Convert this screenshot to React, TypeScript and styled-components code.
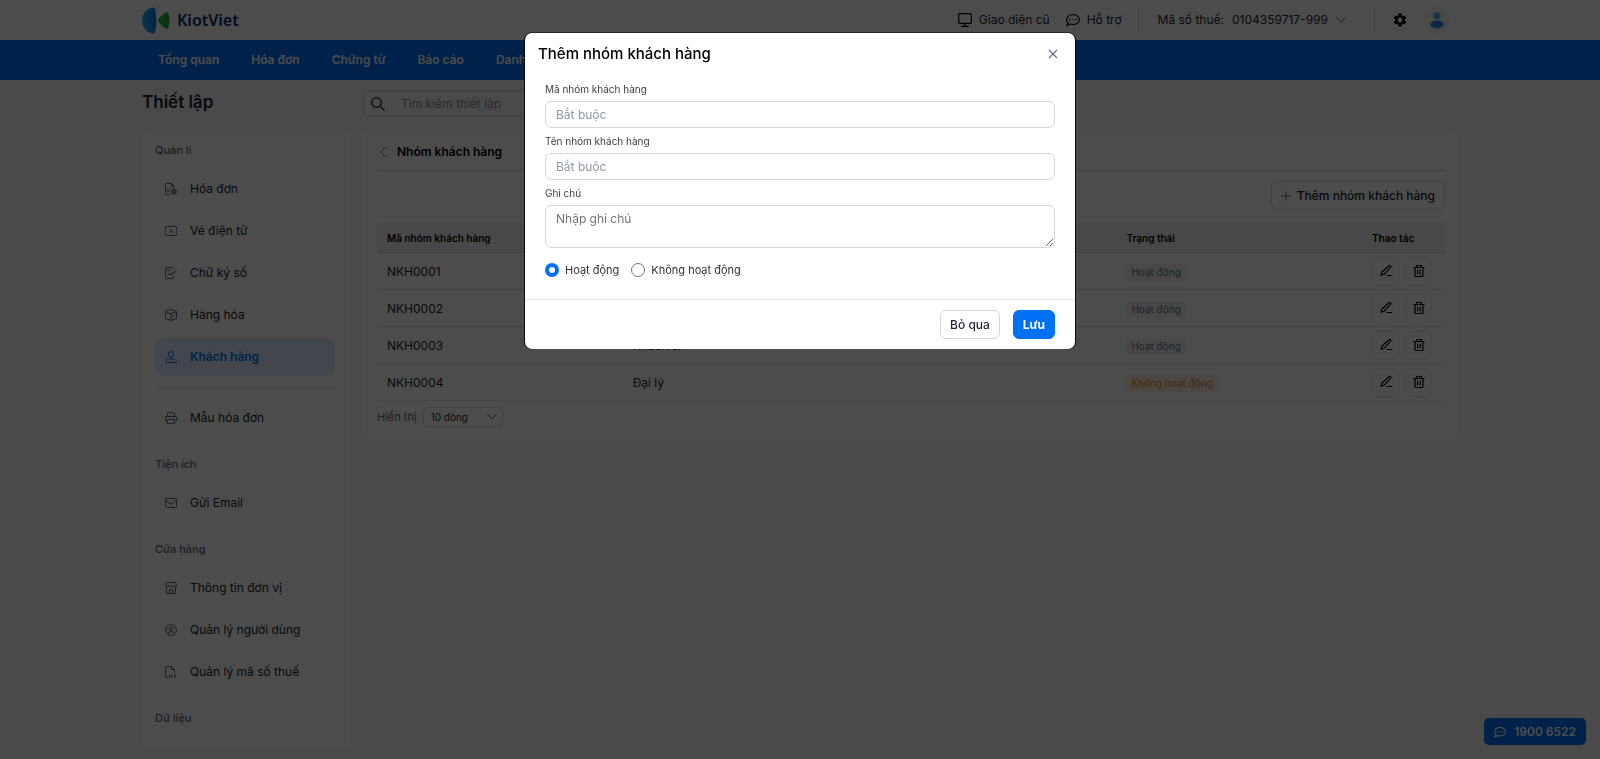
import React, { useState } from "react";
import styled, { createGlobalStyle, css } from "styled-components";
import { FaRegCommentDots } from "react-icons/fa";
import { MdSettings } from "react-icons/md";

const font = `Inter, "Noto Sans", "Liberation Sans", sans-serif`;

const GlobalStyle = createGlobalStyle`
  *, *::before, *::after { box-sizing: border-box; }
  body { margin: 0; background: #f7f7f8; color: #1b2430; font: 400 12px/20px ${font}; }
  button, input, select, textarea { font: inherit; color: inherit; margin: 0; }
  button { cursor: pointer; }
  a { color: inherit; text-decoration: none; }
`;

const Container = styled.div`
  display: flex;
  width: 100%;
  max-width: 1340px;
  margin: 0 auto;
  padding: 0 12px;
`;

const TopBar = styled.header`
  background: #fff;
`;

const TopInner = styled(Container)`
  height: 40px;
  align-items: center;
  justify-content: space-between;
`;

const Brand = styled.a`
  display: flex;
  align-items: center;
  gap: 7px;
  color: #0b2a66;
  font: 600 16px/24px "Noto Sans", sans-serif;
`;

const TopTools = styled.div`
  display: flex;
  align-items: center;
  gap: 16px;
  padding-right: 8px;
`;

const ToolLink = styled.a`
  display: flex;
  align-items: center;
  gap: 7px;
`;

const Divider = styled.span`
  width: 1px;
  height: 26px;
  background: #e3e6ea;
`;

const TaxPicker = styled.button`
  display: flex;
  align-items: center;
  gap: 8px;
  margin: 0 12px 0 3px;
  padding: 0;
  border: 0;
  background: none;
`;

const PlainButton = styled.button`
  display: flex;
  padding: 0;
  border: 0;
  background: none;
  color: #000;
`;

const GearButton = styled(PlainButton)`
  margin-left: 1px;
`;

const AvatarButton = styled(PlainButton)`
  width: 26px;
  height: 26px;
  border-radius: 50%;
  background: #f1f3f6;
  align-items: center;
  justify-content: center;
`;

const NavBar = styled.nav`
  background: #0070f4;
`;

const NavLink = styled.a`
  padding: 0 16px;
  color: #fff;
  font-size: 12px;
  font-weight: 600;
  line-height: 40px;
`;

const PageHead = styled(Container)`
  height: 50px;
  padding-top: 10px;
  gap: 13px;
`;

const PageTitle = styled.h1`
  width: 208px;
  margin: 0;
  font-size: 17px;
  font-weight: 600;
  line-height: 24px;
`;

const SearchBox = styled.label`
  display: flex;
  align-items: center;
  gap: 16px;
  width: 400px;
  height: 27px;
  padding: 0 7px;
  border: 1px solid #d3d7dd;
  border-radius: 6px;
`;

const SearchInput = styled.input`
  flex: 1;
  min-width: 0;
  padding: 0;
  border: 0;
  background: none;
  outline: none;
  &::placeholder { color: #8b939e; opacity: 1; }
`;

const Body = styled(Container)`
  align-items: flex-start;
  gap: 13px;
  padding-bottom: 10px;
`;

const panel = css`
  background: #fff;
  border-radius: 8px;
`;

const Sidebar = styled.aside`
  ${panel}
  flex: none;
  width: 208px;
  padding: 10px 15px 21px 13px;
`;

const GroupLabel = styled.h2`
  margin: 0 0 10px;
  color: #5c6673;
  font-size: 11px;
  font-weight: 500;
  line-height: 20px;
`;

const Menu = styled.ul`
  display: flex;
  flex-direction: column;
  gap: 4px;
  margin: 0 0 17px;
  padding: 0;
  list-style: none;
`;

const MenuLink = styled.a<{ $active?: boolean }>`
  display: flex;
  align-items: center;
  gap: 13px;
  height: 38px;
  padding: 0 10px;
  border-radius: 8px;
  background: ${(p) => (p.$active ? "#dfecfe" : "transparent")};
  color: ${(p) => (p.$active ? "#0070f4" : "#1b2430")};
  font-weight: ${(p) => (p.$active ? 600 : 400)};
  svg { color: ${(p) => (p.$active ? "#0070f4" : "#5c6673")}; }
`;

const MenuRule = styled.li`
  height: 1px;
  margin: 7px 0;
  background: #e6e9ed;
`;

const Panel = styled.main`
  ${panel}
  flex: 1;
  min-width: 0;
  padding: 0 13px 14px 14px;
`;

const PanelHead = styled.div`
  display: flex;
  align-items: center;
  gap: 9px;
  height: 41px;
  padding: 3px 0 0 1px;
  border-bottom: 1px solid #d8dce1;
`;

const PanelTitle = styled.h2`
  margin: 0;
  color: #000;
  font-size: 12px;
  font-weight: 600;
`;

const Toolbar = styled.div`
  display: flex;
  justify-content: flex-end;
  padding: 10px 0 13px;
`;

const OutlineButton = styled.button`
  display: flex;
  align-items: center;
  gap: 6px;
  height: 29px;
  padding: 0 9px;
  border: 1px solid #d3d7dd;
  border-radius: 6px;
  background: #fff;
  color: #1b2430;
  font-weight: 500;
`;

const DataTable = styled.table`
  width: 100%;
  table-layout: fixed;
  border-collapse: separate;
  border-spacing: 0;
`;

const HeadCell = styled.th<{ $width?: string }>`
  width: ${(p) => p.$width ?? "auto"};
  height: 30px;
  padding: 0 10px;
  border-bottom: 1px solid #cdd2d8;
  background: #f0f1f3;
  color: #000;
  font-size: 10px;
  font-weight: 600;
  text-align: left;
`;

const Cell = styled.td`
  height: 37px;
  padding: 2px 10px 0;
  border-bottom: 1px solid #e3e6ea;
`;

const ActionCell = styled(Cell)`
  padding: 0 10px;
`;

const Tag = styled.span<{ $off?: boolean }>`
  display: inline-block;
  padding: 0 5px;
  border-radius: 3px;
  background: ${(p) => (p.$off ? "#fdeee2" : "#f0f1f3")};
  color: ${(p) => (p.$off ? "#f58220" : "#69727f")};
  font-size: 10px;
  line-height: 17px;
`;

const Actions = styled.div`
  display: flex;
  gap: 6px;
`;

const ActionButton = styled.button`
  display: flex;
  align-items: center;
  justify-content: center;
  width: 27px;
  height: 29px;
  padding: 0;
  border: 1px solid #eceef1;
  border-radius: 6px;
  background: #fff;
  color: #000;
`;

const Pager = styled.label`
  display: flex;
  align-items: center;
  gap: 6px;
  padding-top: 6px;
  color: #5c6673;
  font-size: 11px;
`;

const SelectWrap = styled.span`
  display: grid;
  grid-template-columns: 1fr 16px;
  align-items: center;
  width: 80px;
  svg { grid-area: 1 / 2; pointer-events: none; }
`;

const PageSize = styled.select`
  grid-area: 1 / 1 / 2 / 3;
  width: 100%;
  height: 20px;
  padding: 0 7px;
  border: 1px solid #d3d7dd;
  border-radius: 5px;
  background: none;
  color: #1b2430;
  font-size: 10px;
  line-height: 18px;
  appearance: none;
`;

const Hotline = styled.a`
  position: fixed;
  right: 14px;
  bottom: 14px;
  display: flex;
  align-items: center;
  gap: 8px;
  height: 27px;
  padding: 0 10px;
  border-radius: 5px;
  background: #0070f4;
  color: #fff;
  font-size: 12px;
  font-weight: 600;
`;

const Overlay = styled.div`
  position: fixed;
  inset: 0;
  display: flex;
  align-items: flex-start;
  justify-content: center;
  padding: 33px 16px;
  background: rgba(0, 0, 0, 0.7);
`;

const Dialog = styled.form`
  width: 100%;
  max-width: 550px;
  border-radius: 7px;
  background: #fff;
  box-shadow: -1px 0 0 #0a0a0a, 1px 0 0 #0a0a0a, 0 -1px 0 rgba(0, 0, 0, 0.45);
`;

const DialogHead = styled.div`
  display: flex;
  align-items: center;
  justify-content: space-between;
  height: 40px;
  padding: 1px 17px 0 13px;
`;

const DialogTitle = styled.h2`
  margin: 0;
  color: #000;
  font-size: 15px;
  font-weight: 500;
  line-height: 24px;
`;

const CloseButton = styled(PlainButton)`
  color: #64748b;
`;

const Fields = styled.div`
  padding: 7px 20px 19px;
`;

const Field = styled.label`
  display: block;
  color: #3d3d3d;
  font-size: 10px;
  line-height: 18px;
`;

const fieldBox = css`
  display: block;
  width: 100%;
  margin: 3px 0 4px;
  padding: 0 10px;
  border: 1px solid #d3d6db;
  border-radius: 6px;
  background: #fff;
  color: #1b2430;
  font-size: 12px;
  outline: none;
`;

const TextInput = styled.input`
  ${fieldBox}
  height: 27px;
  &::placeholder { color: #8e98a8; opacity: 1; }
`;

const NoteArea = styled.textarea`
  ${fieldBox}
  height: 43px;
  padding: 4px 10px;
  line-height: 18px;
  &::placeholder { color: #757575; opacity: 1; }
`;

const Choices = styled.div`
  display: flex;
  gap: 12px;
  padding-top: 8px;
`;

const Choice = styled.label`
  display: flex;
  align-items: center;
  gap: 6px;
  color: #333;
  font-size: 11px;
  line-height: 20px;
`;

const Radio = styled.input`
  width: 14px;
  height: 14px;
  border: 1px solid #6b7280;
  border-radius: 50%;
  background: #fff;
  appearance: none;
  &:checked { border: 4px solid #0070f4; }
`;

const DialogFoot = styled.div`
  display: flex;
  justify-content: flex-end;
  gap: 13px;
  padding: 10px 20px;
  border-top: 1px solid #e3e6ea;
`;

const FootButton = styled(OutlineButton)<{ $primary?: boolean }>`
  font-weight: ${(p) => (p.$primary ? 700 : 500)};
  ${(p) =>
    p.$primary &&
    css`
      border-color: #0070f4;
      background: #0070f4;
      color: #fff;
    `}
`;

const Line = ({ size = 12, children }: { size?: number; children: React.ReactNode }) => (
  <svg width={size} height={size} viewBox="0 0 12 12" fill="none" stroke="currentColor" strokeWidth="1" strokeLinecap="round" strokeLinejoin="round" aria-hidden="true">
    {children}
  </svg>
);

const InvoiceIcon = () => (
  <Line>
    <path d="M4.5 11.5h-3a1 1 0 0 1-1-1v-9a1 1 0 0 1 1-1h5l2.5 2.5v2M6.3.7v2.5H9M2.5 6h2.5M2.5 8.5h1.500" />
    <circle cx="8.700" cy="8.700" r="2.600" fill="currentColor" fillOpacity="0.5" />
    <path d="M8.700 7.500v2.400" />
  </Line>
);
const TicketIcon = () => (
  <Line>
    <path d="M.5 2.500a1 1 0 0 1 1-1h9a1 1 0 0 1 1 1v1.500M.5 4V2.500M.5 8v1.500a1 1 0 0 0 1 1h9a1 1 0 0 0 1-1V8" />
    <path d="M.5 4v4M11.500 4v4" strokeDasharray="1 1" strokeLinecap="butt" />
    <path d="M7 4.800H5.800a.6.600 0 0 0 0 1.200h.5a.6.600 0 0 1 0 1.200H5M6 4v4" strokeWidth=".8" strokeLinecap="butt" />
  </Line>
);
const SignIcon = () => (
  <Line>
    <path d="M8.500 1.500a1 1 0 0 0-1-1h-5.500a1.500 1.500 0 0 0-1.500 1.500v8a1.500 1.500 0 0 0 1.500 1.500h5.500a1 1 0 0 0 1-1v-1.500M2.500 3h3M3 7.500c.8-1.200 1.400.7 2.200.2" />
    <path d="M11.500 3 7.500 7.200l-1.800.6.500-1.700" />
  </Line>
);
const BoxIcon = () => (
  <Line>
    <path d="M6 .5 11.500 2.500v7L6 11.500.5 9.500v-7zM.5 2.700 6 4.700l5.500-2M6 4.700v6.800M8 7.300l1.500-.5" />
  </Line>
);
const UserIcon = () => (
  <Line>
    <circle cx="6" cy="3.300" r="2.700" />
    <path d="M1.500 11.500c-.8 0-.9-.6-.8-1C1.100 8.700 2.600 8 4.200 7.800h3.600c1.600.2 3.100.9 3.500 2.700.1.400 0 1-.8 1z" />
  </Line>
);
const PrinterIcon = () => (
  <Line>
    <path d="M2.500 4.500v-3a1 1 0 0 1 1-1h5a1 1 0 0 1 1 1v3M2.500 9.200h-1a1 1 0 0 1-1-1V6a1.500 1.500 0 0 1 1.500-1.500h8A1.500 1.500 0 0 1 11.500 6v2.200a1 1 0 0 1-1 1h-1M2.500 7.500h7v4h-7z" />
  </Line>
);
const MailIcon = () => (
  <Line>
    <rect x=".5" y="1.500" width="11" height="9" rx="1" />
    <path d="m.8 3.500 4.200 3.200q1 .7 2 0l4.200-3.200" />
  </Line>
);
const StoreIcon = () => (
  <Line>
    <path d="M1.500.5h9l1 3a1.400 1.400 0 0 1-2.800 0 1.400 1.400 0 0 1-2.700 0 1.400 1.400 0 0 1-2.700 0 1.400 1.400 0 0 1-2.800 0zM1.500 5v6.500h9V5M4.500 11.500v-4h3v4" />
  </Line>
);
const PersonIcon = () => (
  <Line>
    <circle cx="6" cy="6" r="5.500" />
    <circle cx="6" cy="4.700" r="1.700" />
    <path d="M3 9.700c.4-1.700 1.300-2 3-2s2.600.3 3 2" />
  </Line>
);
const TaxFileIcon = () => (
  <Line>
    <path d="M2.500 11.500h-1a1 1 0 0 1-1-1v-9a1 1 0 0 1 1-1h5l3 3V7M6.500.7v2.800h2.800" />
    <path d="M4 9.500h1.500M6.500 9.500H8M9.500 9.500H11M4.500 9.500v2.500M7 9.500v2.500M10 9.500v2.500" strokeLinecap="butt" />
  </Line>
);
const PencilIcon = () => (
  <Line>
    <path d="M7.500 2 9 .8a1 1 0 0 1 1.500 1.500L4 9.300l-3 1 .8-3zM7 10.500h4.500" strokeWidth="1.200" />
  </Line>
);
const TrashIcon = () => (
  <Line>
    <path d="M.8 2.500h10.400M3.500 2.300V1a.6.6 0 0 1 .6-.6h3.800a.6.6 0 0 1 .6.6v1.300M2 2.500v8a1 1 0 0 0 1 1h6a1 1 0 0 0 1-1v-8M4.700 5v4M7.300 5v4" strokeWidth="1.200" />
  </Line>
);
const Chevron = () => (
  <svg width="10" height="6" viewBox="0 0 10 6" fill="none" stroke="#5c6673" aria-hidden="true">
    <path d="M.5.5 5 5 9.500.5" />
  </svg>
);
const BackIcon = () => (
  <svg width="10" height="10" viewBox="0 0 10 10" fill="none" stroke="#5c6673" aria-hidden="true">
    <path d="M7 .5 2.500 5 7 9.500" />
  </svg>
);
const PlusIcon = () => (
  <svg width="10" height="10" viewBox="0 0 10 10" fill="none" stroke="#5c6673" aria-hidden="true">
    <path d="M5 0v10M0 5h10" />
  </svg>
);
const CloseIcon = () => (
  <svg width="10" height="10" viewBox="0 0 10 10" fill="none" stroke="currentColor" strokeWidth="1.300" aria-hidden="true">
    <path d="m1 1 8 8M9 1 1 9" />
  </svg>
);
const SearchIcon = () => (
  <svg width="14" height="14" viewBox="0 0 14 14" fill="none" stroke="#1b2430" strokeWidth="1.300" aria-hidden="true">
    <circle cx="5.500" cy="5.500" r="4.800" />
    <path d="m9 9 4.500 4.500" />
  </svg>
);
const MonitorIcon = () => (
  <svg width="14" height="14" viewBox="0 0 14 14" fill="none" stroke="#000" strokeWidth="1.200" aria-hidden="true">
    <rect x=".7" y=".7" width="12.600" height="9.600" rx=".8" />
    <path d="M7 10.500v2.500M3.200 13.300h7.600" />
  </svg>
);
const Logo = () => (
  <svg width="28" height="27" viewBox="0 0 28 27" aria-hidden="true">
    <defs>
      <linearGradient id="sail" x1="0" x2="1">
        <stop offset="0" stopColor="#28b4f5" />
        <stop offset="1" stopColor="#0a6ff0" />
      </linearGradient>
      <linearGradient id="leaf" x1="0" x2="1">
        <stop offset="0" stopColor="#2fc93a" />
        <stop offset="1" stopColor="#12a52a" />
      </linearGradient>
    </defs>
    <path d="M12.500.4C13.500 3 14.300 8 14.300 13.500S13.500 24 12.500 26.600C5 26.300 0 21 0 13.500S5 .7 12.500.4z" fill="url(#sail)" />
    <path d="M16 12.800c2-2.800 4.500-5.300 8-7.300 1.600-.8 2.200.2 2.600 1.500a22 22 0 0 1 0 13c-.4 1.300-1 2.300-2.600 1.500-3.500-2-6-4.500-8-7.300q-.4-.7 0-1.400z" fill="url(#leaf)" />
  </svg>
);
const AvatarIcon = () => (
  <svg width="14" height="17" viewBox="0 0 14 17" aria-hidden="true">
    <circle cx="7" cy="3.700" r="3.500" fill="#5ea3f7" />
    <ellipse cx="7" cy="12.500" rx="6.800" ry="4" fill="#2a86f3" />
  </svg>
);

const groups = [
  {
    label: "Quản lí",
    items: [
      { text: "Hóa đơn", Icon: InvoiceIcon },
      { text: "Vé điện tử", Icon: TicketIcon },
      { text: "Chữ ký số", Icon: SignIcon },
      { text: "Hàng hóa", Icon: BoxIcon },
      { text: "Khách hàng", Icon: UserIcon, active: true },
      { text: "Mẫu hóa đơn", Icon: PrinterIcon, ruled: true },
    ],
  },
  { label: "Tiện ích", items: [{ text: "Gửi Email", Icon: MailIcon }] },
  {
    label: "Cửa hàng",
    items: [
      { text: "Thông tin đơn vị", Icon: StoreIcon },
      { text: "Quản lý người dùng", Icon: PersonIcon },
      { text: "Quản lý mã số thuế", Icon: TaxFileIcon },
    ],
  },
] as { label: string; items: { text: string; Icon: React.FC; active?: boolean; ruled?: boolean }[] }[];

const LastLabel = styled(GroupLabel)`
  margin-bottom: 0;
`;

const rows = [
  { code: "NKH0001", name: "Khách lẻ", active: true },
  { code: "NKH0002", name: "Khách VIP", active: true },
  { code: "NKH0003", name: "Khách sỉ", active: true },
  { code: "NKH0004", name: "Đại lý", active: false },
];

export default function App() {
  const [active, setActive] = useState(true);
  return (
    <>
      <GlobalStyle />
      <TopBar>
        <TopInner>
          <Brand href="#"><Logo />KiotViet</Brand>
          <TopTools>
            <ToolLink href="#"><MonitorIcon />Giao diện cũ</ToolLink>
            <ToolLink href="#"><FaRegCommentDots size={14} />Hỗ trợ</ToolLink>
            <Divider />
            <TaxPicker type="button"><span>Mã số thuế:</span><span>0104359717-999</span><Chevron /></TaxPicker>
            <Divider />
            <GearButton type="button" aria-label="Thiết lập"><MdSettings size={16} /></GearButton>
            <AvatarButton type="button" aria-label="Tài khoản"><AvatarIcon /></AvatarButton>
          </TopTools>
        </TopInner>
      </TopBar>
      <NavBar>
        <Container>
          {["Tổng quan", "Hóa đơn", "Chứng từ", "Báo cáo", "Danh mục"].map((t) => (
            <NavLink href="#" key={t}>{t}</NavLink>
          ))}
        </Container>
      </NavBar>
      <PageHead>
        <PageTitle>Thiết lập</PageTitle>
        <SearchBox>
          <SearchIcon />
          <SearchInput placeholder="Tìm kiếm thiết lập" aria-label="Tìm kiếm thiết lập" />
        </SearchBox>
      </PageHead>
      <Body>
        <Sidebar>
          {groups.map((g) => (
            <React.Fragment key={g.label}>
              <GroupLabel>{g.label}</GroupLabel>
              <Menu>
                {g.items.map(({ text, Icon, active: on, ruled }) => (
                  <React.Fragment key={text}>
                    {ruled && <MenuRule role="separator" />}
                    <li><MenuLink href="#" $active={on}><Icon />{text}</MenuLink></li>
                  </React.Fragment>
                ))}
              </Menu>
            </React.Fragment>
          ))}
          <LastLabel>Dữ liệu</LastLabel>
        </Sidebar>
        <Panel>
          <PanelHead>
            <PlainButton type="button" aria-label="Quay lại"><BackIcon /></PlainButton>
            <PanelTitle>Nhóm khách hàng</PanelTitle>
          </PanelHead>
          <Toolbar>
            <OutlineButton type="button"><PlusIcon />Thêm nhóm khách hàng</OutlineButton>
          </Toolbar>
          <DataTable>
            <thead>
              <tr>
                <HeadCell $width="23%">Mã nhóm khách hàng</HeadCell>
                <HeadCell $width="23%">Tên nhóm khách hàng</HeadCell>
                <HeadCell>Ghi chú</HeadCell>
                <HeadCell $width="23%">Trạng thái</HeadCell>
                <HeadCell $width="83px">Thao tác</HeadCell>
              </tr>
            </thead>
            <tbody>
              {rows.map((r) => (
                <tr key={r.code}>
                  <Cell>{r.code}</Cell>
                  <Cell>{r.name}</Cell>
                  <Cell />
                  <Cell><Tag $off={!r.active}>{r.active ? "Hoạt động" : "Không hoạt động"}</Tag></Cell>
                  <ActionCell>
                    <Actions>
                      <ActionButton type="button" aria-label="Sửa"><PencilIcon /></ActionButton>
                      <ActionButton type="button" aria-label="Xóa"><TrashIcon /></ActionButton>
                    </Actions>
                  </ActionCell>
                </tr>
              ))}
            </tbody>
          </DataTable>
          <Pager>
            Hiển thị
            <SelectWrap>
              <PageSize defaultValue="10">
                <option value="10">10 dòng</option>
                <option value="20">20 dòng</option>
              </PageSize>
              <Chevron />
            </SelectWrap>
          </Pager>
        </Panel>
      </Body>
      <Hotline href="tel:19006522"><FaRegCommentDots size={12} />1900 6522</Hotline>
      <Overlay>
        <Dialog role="dialog" aria-labelledby="dialog-title" onSubmit={(e) => e.preventDefault()}>
          <DialogHead>
            <DialogTitle id="dialog-title">Thêm nhóm khách hàng</DialogTitle>
            <CloseButton type="button" aria-label="Đóng"><CloseIcon /></CloseButton>
          </DialogHead>
          <Fields>
            <Field>Mã nhóm khách hàng<TextInput placeholder="Bắt buộc" /></Field>
            <Field>Tên nhóm khách hàng<TextInput placeholder="Bắt buộc" /></Field>
            <Field>Ghi chú<NoteArea placeholder="Nhập ghi chú" /></Field>
            <Choices>
              <Choice><Radio type="radio" name="status" checked={active} onChange={() => setActive(true)} />Hoạt động</Choice>
              <Choice><Radio type="radio" name="status" checked={!active} onChange={() => setActive(false)} />Không hoạt động</Choice>
            </Choices>
          </Fields>
          <DialogFoot>
            <FootButton type="button">Bỏ qua</FootButton>
            <FootButton type="submit" $primary>Lưu</FootButton>
          </DialogFoot>
        </Dialog>
      </Overlay>
    </>
  );
}
